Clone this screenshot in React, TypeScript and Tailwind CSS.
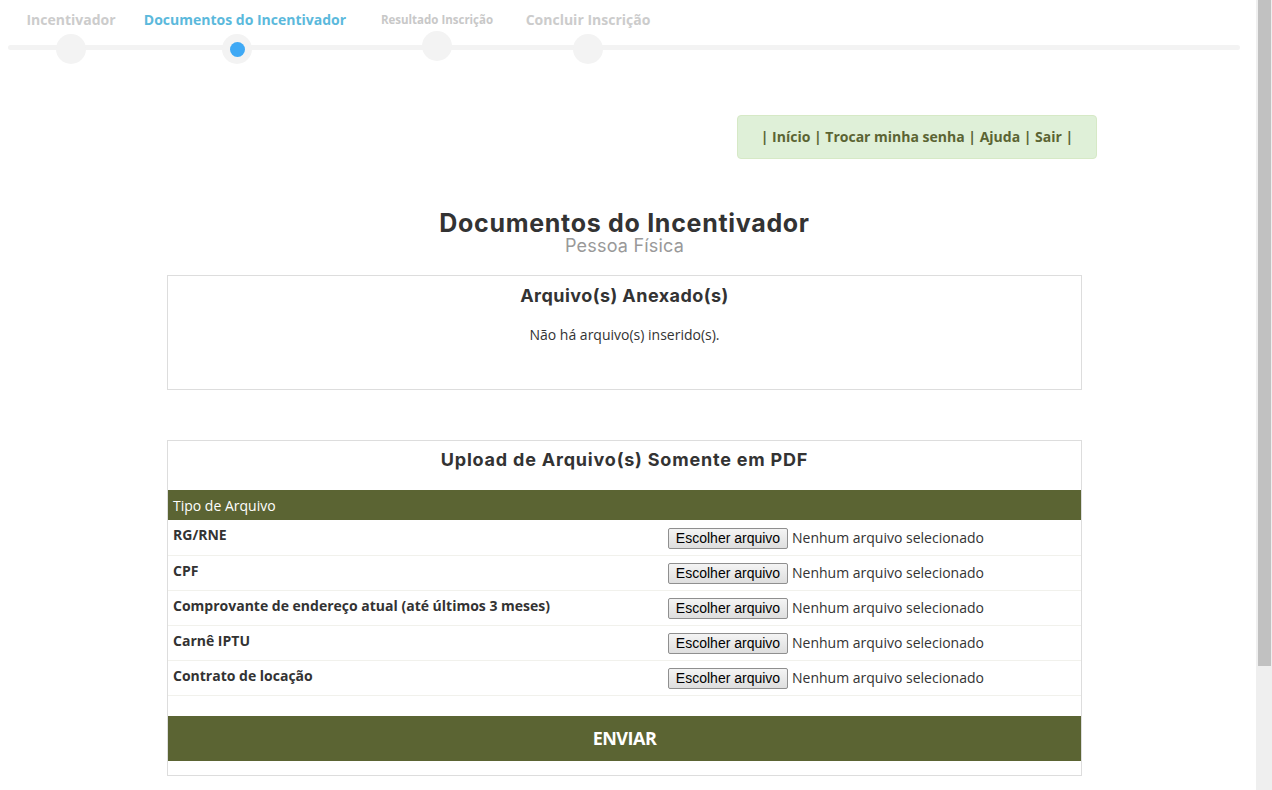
import React from 'react'

const steps = [
  { label: 'Incentivador', w: 'w-[126px]', text: 'text-[14px] text-[#cccccc]', dot: false, up: false },
  { label: 'Documentos do Incentivador', w: 'w-[222px]', text: 'text-[14px] text-[#5bb9dc]', dot: true, up: false },
  { label: 'Resultado Inscrição', w: 'w-[162px]', text: 'text-[11.5px] text-[#c8c8c8]', dot: false, up: true },
  { label: 'Concluir Inscrição', w: 'w-[140px]', text: 'text-[14px] text-[#cccccc]', dot: false, up: false },
]

const arquivos = [
  'RG/RNE',
  'CPF',
  'Comprovante de endereço atual (até últimos 3 meses)',
  'Carnê IPTU',
  'Contrato de locação',
]

const App = () => {
  return (
    <div className="flex h-[790px] overflow-hidden bg-white font-['Open_Sans',sans-serif] text-[#333333]">
      <div className="w-[1256px] shrink-0">
        {/* Steps */}
        <div className="relative h-[64px] pl-[8px]">
          <div className="absolute left-[8px] top-[45px] h-[5px] w-[1232px] rounded-full bg-[#f3f3f3]"></div>
          <div className="flex">
            {steps.map((s) => (
              <div key={s.label} className={`${s.w} flex flex-col items-center pt-[10px]`}>
                <div className={`h-[20px] leading-[20px] font-bold ${s.text}`}>{s.label}</div>
                <div
                  className={`relative z-10 flex h-[30px] w-[30px] items-center justify-center rounded-full bg-[#f3f3f3] ${
                    s.up ? 'mt-[1px]' : 'mt-[4px]'
                  } ${s.dot ? 'mr-[16px]' : ''}`}
                >
                  {s.dot && <div className="h-[15px] w-[15px] rounded-full bg-[#3fa9f5]"></div>}
                </div>
              </div>
            ))}
          </div>
        </div>

        {/* Menu */}
        <div className="ml-[737px] mt-[51px] flex h-[44px] w-[360px] items-center justify-center rounded-[4px] border border-[#d6e9c6] bg-[#dff0d8] pb-[2px] text-[14px] font-bold text-[#5b6433]">
          | Início | Trocar minha senha | Ajuda | Sair |
        </div>

        <div className="ml-[167px] w-[915px]">
          {/* Title */}
          <div className="mt-[51px] text-center font-['Inter',sans-serif]">
            <h1 className="text-[25px] font-bold leading-[26px] tracking-[0.7px] text-[#333333]">
              Documentos do Incentivador
            </h1>
            <p className="text-[18px] leading-[20px] tracking-[0.2px] text-[#999999]">Pessoa Física</p>
          </div>

          {/* Anexados */}
          <div className="mt-[19px] h-[115px] border border-[#dddddd] text-center">
            <h2 className="mt-[8px] font-['Inter',sans-serif] text-[18px] font-bold leading-[24px] tracking-[0.45px]">
              Arquivo(s) Anexado(s)
            </h2>
            <p className="mt-[17px] text-[14px] leading-[20px]">Não há arquivo(s) inserido(s).</p>
          </div>

          {/* Upload */}
          <div className="mt-[50px] border border-[#dddddd] pb-[14px]">
            <h2 className="mt-[7px] text-center font-['Inter',sans-serif] text-[18px] font-bold leading-[24px] tracking-[0.8px]">
              Upload de Arquivo(s) Somente em PDF
            </h2>
            <div className="mt-[18px] flex h-[30px] items-center bg-[#5b6433] px-[5px] text-[14px] text-white">
              Tipo de Arquivo
            </div>
            {arquivos.map((a, i) => (
              <div
                key={a}
                className={`flex border-b border-[#f1f1ec] ${i === 0 ? 'h-[36px]' : 'h-[35px]'}`}
              >
                <div className="w-[500px] px-[5px] pt-[5px] text-[14px] font-bold leading-[20px]">{a}</div>
                <div className={`flex items-start ${i === 0 ? 'pt-[8px]' : 'pt-[7px]'}`}>
                  <button className="h-[21px] w-[120px] rounded-[2px] border border-[#8f8f8f] bg-gradient-to-b from-[#f4f4f4] to-[#dedede] font-['Liberation_Sans',sans-serif] text-[14px] leading-[19px] text-black">
                    Escolher arquivo
                  </button>
                  <span className="ml-[4px] text-[14px] leading-[20px] text-[#333333]">Nenhum arquivo selecionado</span>
                </div>
              </div>
            ))}
            <button className="mt-[20px] flex h-[45px] w-full items-center justify-center bg-[#5b6433] text-[18px] font-bold tracking-[-0.5px] text-white">
              ENVIAR
            </button>
          </div>
        </div>
      </div>

      {/* Scrollbar */}
      <div className="w-[16px] shrink-0 bg-[#efefef] pl-[2px] pr-[1px]">
        <div className="h-[666px] bg-[#c1c1c1]"></div>
      </div>
    </div>
  )
}

export default App
